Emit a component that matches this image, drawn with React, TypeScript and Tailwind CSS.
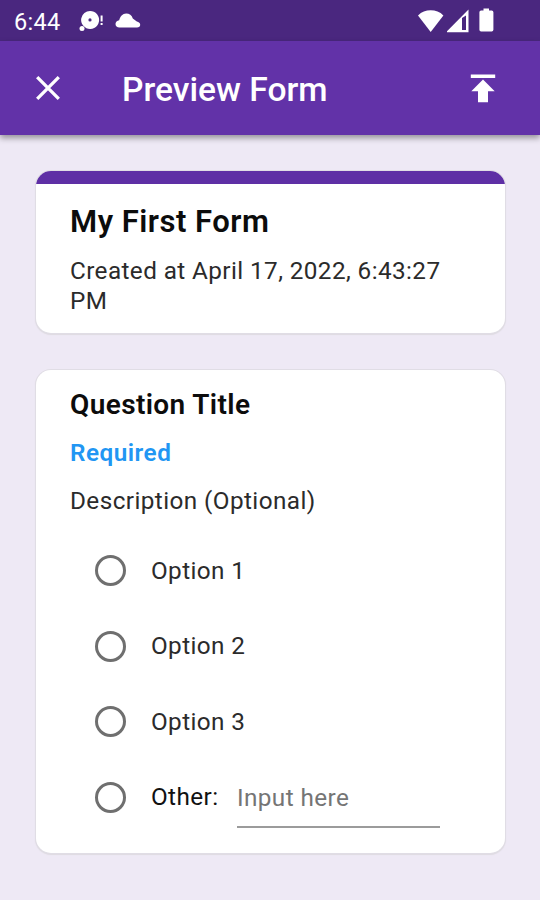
import type { ReactNode } from "react";

const options = ["Option 1", "Option 2", "Option 3"];

function StatusBar() {
  return (
    <div className="flex h-[41px] items-center bg-[#4a277f] pl-[14px] pr-[45px] text-white">
      <span className="w-[65px] pt-[3px] text-[23.5px] leading-[38px] tracking-[0.3px]">6:44</span>
      <svg width="24" height="22" viewBox="0 0 24 22" fill="currentColor">
        <path
          fillRule="evenodd"
          d="M11 1a9 9 0 1 1-3.6 17.2A9 9 0 0 1 11 1Zm0 7.3a1.6 1.6 0 1 0 0 3.2 1.6 1.6 0 0 0 0-3.2Z"
        />
        <circle cx="3" cy="18.5" r="2.5" />
        <path d="M21.6 5.5h2v6h-2zM21.6 13h2v2h-2z" />
      </svg>
      <svg className="ml-[12px]" width="26" height="16" viewBox="0 0 26 16" fill="currentColor">
        <path d="M4.5 14.5C2 14.5 .5 13.2 .5 11c0-2 1.5-3.5 3.7-3.8C5 3.7 7.6 .5 11.2 .5c3.200 0 5.600 1.800 6.600 5l4 3c2 .5 3.400 1.500 3.400 3.200 0 1.800-1.200 2.800-3.200 2.800Z" />
      </svg>
      <div className="ml-auto flex items-center">
        <svg width="29" height="24" viewBox="0 0 29 24" fill="currentColor">
          <path d="M12.7 23 0 6.4C3.5 3 7.9 1.3 12.7 1.3s9.2 1.7 12.7 5.1Z" />
        </svg>
        <svg width="24" height="24" viewBox="0 0 24 24" fill="currentColor">
          <path fillRule="evenodd" d="M21.5 .5v22.700H-1ZM15 9v12h4V6.500Z" />
        </svg>
        <svg className="ml-[7px]" width="17" height="25" viewBox="0 0 17 25" fill="currentColor">
          <path d="M5.5 .5h5.500v2h2.700A1.700 1.700 0 0 1 15.400 4.200v17.600a1.700 1.700 0 0 1-1.700 1.700H3.100A1.700 1.700 0 0 1 1.400 21.800V4.200A1.700 1.700 0 0 1 3.100 2.500h2.400Z" />
        </svg>
      </div>
    </div>
  );
}

function AppBar() {
  return (
    <header className="flex h-[94px] items-center bg-[#6232a8] pl-[36px] pr-[44px] text-white shadow-[0_3px_6px_rgba(0,0,0,0.38)]">
      <svg width="24" height="24" viewBox="0 0 24 24" stroke="currentColor" strokeWidth="3.3">
        <path d="M1.2 1.2 22.8 22.8M22.8 1.2 1.2 22.8" />
      </svg>
      <h1 className="ml-[62px] pt-[3px] text-[33.6px] font-medium leading-[39px]">Preview Form</h1>
      <svg className="ml-auto" width="26" height="30" viewBox="0 0 26 30" fill="currentColor">
        <path d="M.8 1.5h24.400V5H.8zM13 6.500 24.700 18.200H18V29.200H8V18.200H1.300Z" />
      </svg>
    </header>
  );
}

function Card({ className, children }: { className: string; children: ReactNode }) {
  return (
    <section className={`overflow-hidden rounded-[15px] bg-white shadow-[0_0_0_1px_#e0dde5,0_1px_1px_1px_#dedbe1] ${className}`}>
      {children}
    </section>
  );
}

function Radio() {
  return <span className="ml-[25px] h-[31px] w-[31px] shrink-0 rounded-full border-[3px] border-[#6f6f6f]" />;
}

export default function App() {
  return (
    <div className="flex h-[900px] w-[540px] flex-col bg-[#eee9f5] font-['Roboto',sans-serif] text-[#2b2b2b]">
      <StatusBar />
      <AppBar />
      <main className="flex flex-col px-[36px] pt-[36px]">
        <Card className="h-[162px] w-[469px]">
          <div className="h-[13px] bg-[#5e2fa5]" />
          <div className="px-[34px] pt-[21px]">
            <h2 className="text-[31px] font-semibold leading-[34px] tracking-[0.5px] text-[#0c0c0c]">My First Form</h2>
            <p className="mt-[17px] text-[24.3px] leading-[30px] tracking-[0.4px]">
              Created at April 17, 2022, 6:43:27 PM
            </p>
          </div>
        </Card>
        <Card className="mt-[37px] h-[483px] w-[469px] px-[34px] pt-[19px]">
          <h3 className="text-[28px] font-semibold leading-[32px] tracking-[0.38px] text-[#0c0c0c]">Question Title</h3>
          <p className="mt-[17px] text-[24.3px] font-semibold leading-[30px] tracking-[0.5px] text-[#2196f3]">
            Required
          </p>
          <p className="mt-[18px] text-[24.3px] leading-[30px] tracking-[0.42px]">Description (Optional)</p>
          <div className="mt-[17px] text-[24.3px] tracking-[0.4px]">
            {options.map((option) => (
              <label key={option} className="flex h-[75.6px] items-center">
                <Radio />
                <span className="ml-[25px]">{option}</span>
              </label>
            ))}
            <label className="flex h-[75.6px] items-center">
              <Radio />
              <span className="ml-[25px] w-[86px] text-[#111111]">Other:</span>
              <span className="h-[60px] w-[203px] border-b-2 border-[#9b9b9b] leading-[60px] text-[#757575]">
                Input here
              </span>
            </label>
          </div>
        </Card>
      </main>
    </div>
  );
}
